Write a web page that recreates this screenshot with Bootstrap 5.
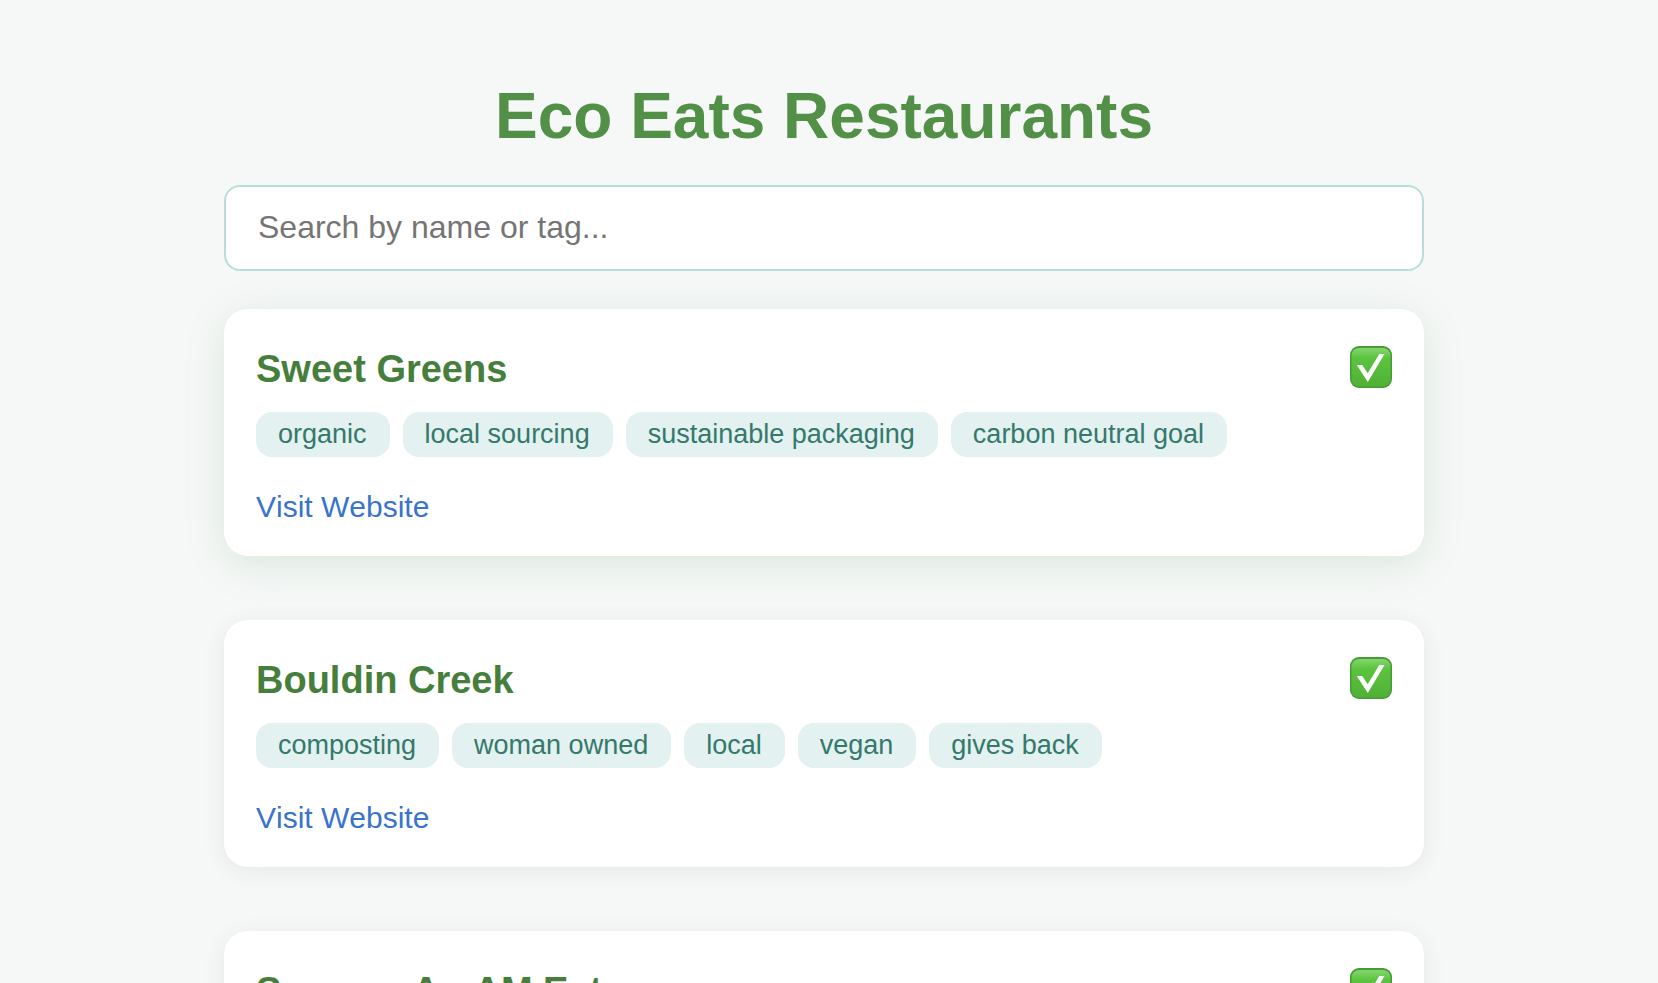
<!DOCTYPE html>
<html lang="en">
<head>
<meta charset="utf-8">
<meta name="viewport" content="width=device-width, initial-scale=1">
<title>Eco Eats Restaurants</title>
<link href="https://cdn.jsdelivr.net/npm/bootstrap@5.3.0/dist/css/bootstrap.min.css" rel="stylesheet">
<style>
  body { background: #f6f8f7; font-family: "Liberation Sans", Arial, sans-serif; font-kerning: none; padding-right: 10px; }
  .eco-wrap { max-width: 1200px; padding-top: 79px; }
  .eco-title { color: #528f47; font-size: 64px; line-height: 74px; margin-bottom: 32px; }
  .eco-search { height: 86px; padding: 0 32px 2px; border: 2px solid #b8deda; border-radius: 16px; font-size: 32px; margin-bottom: 38px; }
  .eco-search::placeholder { color: #757575; }
  .eco-list { gap: 64px; }
  .eco-card { background: #fff; border: 0; border-radius: 24px; padding: 32px; box-shadow: 0 4px 24px rgba(0, 0, 0, .07); }
  .eco-card.active { box-shadow: 0 8px 40px rgba(67, 134, 72, .15); }
  .eco-head { height: 58px; margin-bottom: 13px; }
  .eco-name { color: #467e3b; font-size: 38px; line-height: 44px; margin-bottom: 2px; }
  .eco-check { width: 42px; height: 42px; margin-bottom: 6px; }
  .eco-tags { gap: 13px; margin-bottom: 33px; }
  .eco-tag { background: #e3f1f0; color: #34796b; border-radius: 16px; padding: 0 23px 0 22px; font-size: 27px; line-height: 45px; }
  .eco-link { color: #3973cd; font-size: 30px; line-height: 34px; }
</style>
</head>
<body class="vh-100 overflow-hidden">
<svg class="position-absolute" width="0" height="0" aria-hidden="true">
  <defs>
    <linearGradient id="face" x1="0" y1="0" x2="0" y2="1">
      <stop offset="0" stop-color="#84d66f"/><stop offset=".14" stop-color="#6fcc55"/><stop offset=".26" stop-color="#5bc43f"/><stop offset="1" stop-color="#50b035"/>
    </linearGradient>
    <symbol id="check" viewBox="0 0 42 42">
      <rect width="42" height="42" rx="9" fill="#459b34"/>
      <rect x="1.5" y="2" width="39" height="38.5" rx="7.5" fill="url(#face)"/>
      <path d="M6.800 19h5.400l5.500 8.200L29.300 8h5.200L17.800 36z" fill="#fff"/>
    </symbol>
  </defs>
</svg>
<main class="eco-wrap mx-auto">
  <h1 class="eco-title fw-bold text-center">Eco Eats Restaurants</h1>
  <input type="search" class="eco-search form-control" placeholder="Search by name or tag..." aria-label="Search by name or tag">
  <div class="eco-list d-flex flex-column">
    <article class="eco-card card active">
      <div class="eco-head d-flex justify-content-between align-items-center">
        <h2 class="eco-name fw-bold">Sweet Greens</h2>
        <svg class="eco-check"><use href="#check"/></svg>
      </div>
      <div class="eco-tags d-flex flex-wrap">
        <span class="eco-tag">organic</span>
        <span class="eco-tag">local sourcing</span>
        <span class="eco-tag">sustainable packaging</span>
        <span class="eco-tag">carbon neutral goal</span>
      </div>
      <a class="eco-link text-decoration-none align-self-start" href="#">Visit Website</a>
    </article>
    <article class="eco-card card">
      <div class="eco-head d-flex justify-content-between align-items-center">
        <h2 class="eco-name fw-bold">Bouldin Creek</h2>
        <svg class="eco-check"><use href="#check"/></svg>
      </div>
      <div class="eco-tags d-flex flex-wrap">
        <span class="eco-tag">composting</span>
        <span class="eco-tag">woman owned</span>
        <span class="eco-tag">local</span>
        <span class="eco-tag">vegan</span>
        <span class="eco-tag">gives back</span>
      </div>
      <a class="eco-link text-decoration-none align-self-start" href="#">Visit Website</a>
    </article>
    <article class="eco-card card">
      <div class="eco-head d-flex justify-content-between align-items-center">
        <h2 class="eco-name fw-bold">Snooze, An AM Eatery</h2>
        <svg class="eco-check"><use href="#check"/></svg>
      </div>
    </article>
  </div>
</main>
<script src="https://cdn.jsdelivr.net/npm/bootstrap@5.3.0/dist/js/bootstrap.bundle.min.js"></script>
</body>
</html>
